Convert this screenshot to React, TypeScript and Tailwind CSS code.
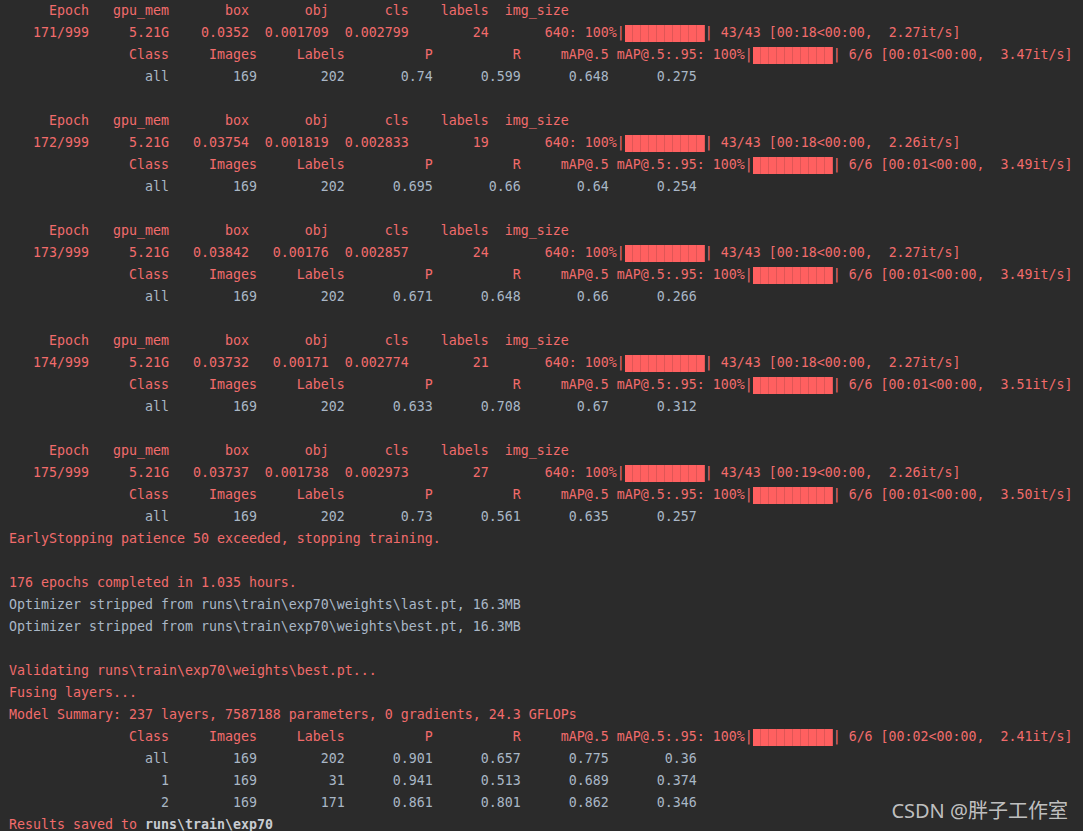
const red = "text-[#f26b6b]";
const grey = "text-[#a9b7c6]";

const p = (s: string, n: number) => s.padStart(n);

type Epoch = {
  ep: string;
  box: string;
  obj: string;
  cls: string;
  labels: string;
  trainTime: string;
  trainRate: string;
  valRate: string;
  stats: string[];
};

const epochs: Epoch[] = [
  { ep: "171/999", box: "0.0352", obj: "0.001709", cls: "0.002799", labels: "24", trainTime: "00:18", trainRate: "2.27", valRate: "3.47", stats: ["0.74", "0.599", "0.648", "0.275"] },
  { ep: "172/999", box: "0.03754", obj: "0.001819", cls: "0.002833", labels: "19", trainTime: "00:18", trainRate: "2.26", valRate: "3.49", stats: ["0.695", "0.66", "0.64", "0.254"] },
  { ep: "173/999", box: "0.03842", obj: "0.00176", cls: "0.002857", labels: "24", trainTime: "00:18", trainRate: "2.27", valRate: "3.49", stats: ["0.671", "0.648", "0.66", "0.266"] },
  { ep: "174/999", box: "0.03732", obj: "0.00171", cls: "0.002774", labels: "21", trainTime: "00:18", trainRate: "2.27", valRate: "3.51", stats: ["0.633", "0.708", "0.67", "0.312"] },
  { ep: "175/999", box: "0.03737", obj: "0.001738", cls: "0.002973", labels: "27", trainTime: "00:19", trainRate: "2.26", valRate: "3.50", stats: ["0.73", "0.561", "0.635", "0.257"] },
];

function Bar() {
  return (
    <span className="inline-flex h-[17px]">
      {Array.from({ length: 10 }).map((_, i) => (
        <span key={i} className="w-[8px] h-full bg-[#ff6060] border-r border-[#df5656]" />
      ))}
    </span>
  );
}

function Line({ children, className = "" }: { children?: React.ReactNode; className?: string }) {
  return <div className={`flex items-center h-[22px] whitespace-pre ${className}`}>{children}</div>;
}

function ClassRow({ rate, time }: { rate: string; time: string }) {
  const head =
    p("Class", 20) + p("Images", 11) + p("Labels", 11) + p("P", 11) + p("R", 11) + p("mAP@.5", 11) + p("mAP@.5:.95", 11);
  return (
    <Line className={red}>
      <span>{head}: 100%|</span>
      <Bar />
      <span>{`| 6/6 [${time}<00:00,  ${rate}it/s]`}</span>
    </Line>
  );
}

function StatRow({ name, labels, stats }: { name: string; labels: string; stats: string[] }) {
  return (
    <Line className={grey}>
      {p(name, 20) + p("169", 11) + p(labels, 11) + stats.map((s) => p(s, 11)).join("")}
    </Line>
  );
}

function EpochBlock({ e, first }: { e: Epoch; first: boolean }) {
  const header = ["Epoch", "gpu_mem", "box", "obj", "cls", "labels", "img_size"].map((s) => p(s, 10)).join("");
  const row = [e.ep, "5.21G", e.box, e.obj, e.cls, e.labels, "640"].map((s) => p(s, 10)).join("");
  return (
    <>
      {!first && <Line />}
      <Line className={red}>{header}</Line>
      <Line className={red}>
        <span>{row}: 100%|</span>
        <Bar />
        <span>{`| 43/43 [${e.trainTime}<00:00,  ${e.trainRate}it/s]`}</span>
      </Line>
      <ClassRow rate={e.valRate} time="00:01" />
      <StatRow name="all" labels="202" stats={e.stats} />
    </>
  );
}

export default function App() {
  return (
    <div className="relative w-[1083px] h-[831px] overflow-hidden bg-[#2b2b2b] font-['DejaVu_Sans_Mono','Liberation_Mono',monospace] text-[13.29px] leading-[22px]">
      <div className="pl-[9px]">
        {epochs.map((e, i) => (
          <EpochBlock key={e.ep} e={e} first={i === 0} />
        ))}
        <Line className={red}>EarlyStopping patience 50 exceeded, stopping training.</Line>
        <Line />
        <Line className={red}>176 epochs completed in 1.035 hours.</Line>
        <Line className={grey}>{"Optimizer stripped from runs\\train\\exp70\\weights\\last.pt, 16.3MB"}</Line>
        <Line className={grey}>{"Optimizer stripped from runs\\train\\exp70\\weights\\best.pt, 16.3MB"}</Line>
        <Line />
        <Line className={red}>{"Validating runs\\train\\exp70\\weights\\best.pt..."}</Line>
        <Line className={red}>Fusing layers...</Line>
        <Line className={red}>Model Summary: 237 layers, 7587188 parameters, 0 gradients, 24.3 GFLOPs</Line>
        <ClassRow rate="2.41" time="00:02" />
        <StatRow name="all" labels="202" stats={["0.901", "0.657", "0.775", "0.36"]} />
        <StatRow name="1" labels="31" stats={["0.941", "0.513", "0.689", "0.374"]} />
        <StatRow name="2" labels="171" stats={["0.861", "0.801", "0.862", "0.346"]} />
        <Line className={red}>
          <span>Results saved to </span>
          <span className="font-bold text-[#c8ccd2]">{"runs\\train\\exp70"}</span>
        </Line>
      </div>
      <div className="absolute right-[15px] bottom-[10px] text-[20px] leading-none text-[#d4d4d4]/90 font-['Noto_Sans','Noto_Sans_CJK_SC',sans-serif]">
        CSDN @胖子工作室
      </div>
    </div>
  );
}
